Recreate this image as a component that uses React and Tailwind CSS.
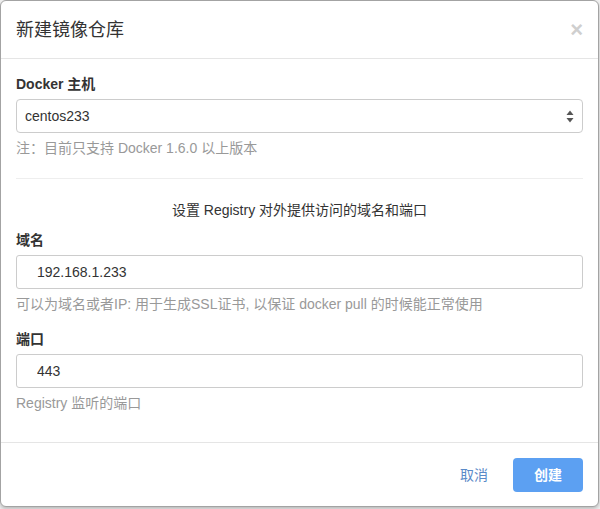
import React from 'react';

const font = 'font-["Liberation_Sans","Noto_Sans_CJK_SC",sans-serif]';

const FieldLabel = ({ children }) => (
    <div className='text-[14px] leading-[20px] font-bold text-[#333] mb-[5px]'>{children}</div>
);

const Help = ({ children }) => (
    <div className='text-[14px] leading-[20px] text-[#999] mt-[5px]'>{children}</div>
);

const TextInput = ({ value }) => (
    <input
        type='text'
        readOnly
        value={value}
        className='block w-full h-[34px] border border-[#ccc] rounded-[3px] pl-[20px] text-[14px] text-[#333] bg-white outline-none'
    />
);

const App = () => {
    return (
        <div className={`w-[600px] h-[509px] bg-[#f2f2f2] ${font}`}>
            <div className='w-[599px] h-[507px] bg-white border border-[#a3a3a3] rounded-[6px] flex flex-col shadow-[0_2px_4px_rgba(0,0,0,0.25)]'>
                <div className='h-[58px] shrink-0 px-[15px] flex items-center justify-between border-b border-[#e5e5e5]'>
                    <div className='text-[18px] text-[#333] pt-[2px]'>新建镜像仓库</div>
                    <div className='text-[22px] leading-none font-bold text-[#cfcfcf]'>×</div>
                </div>

                <div className='flex-1 px-[15px] pt-[15px]'>
                    <FieldLabel>Docker 主机</FieldLabel>
                    <div className='h-[34px] border border-[#ccc] rounded-[4px] flex items-center justify-between pl-[8px] pr-[8px]'>
                        <span className='text-[14px] text-[#333]'>centos233</span>
                        <svg width='8' height='13' viewBox='0 0 8 13'>
                            <path d='M4 0.5 L7.5 5 L0.5 5 Z' fill='#555' />
                            <path d='M4 12.5 L7.5 8 L0.5 8 Z' fill='#555' />
                        </svg>
                    </div>
                    <Help>注：目前只支持 Docker 1.6.0 以上版本</Help>

                    <div className='h-px bg-[#eee] mt-[20px]' />

                    <div className='text-center text-[14px] leading-[20px] text-[#333] mt-[21px] mb-[10px]'>
                        设置 Registry 对外提供访问的域名和端口
                    </div>

                    <FieldLabel>域名</FieldLabel>
                    <TextInput value='192.168.1.233' />
                    <Help>可以为域名或者IP: 用于生成SSL证书, 以保证 docker pull 的时候能正常使用</Help>

                    <div className='mt-[15px]'>
                        <FieldLabel>端口</FieldLabel>
                        <TextInput value='443' />
                        <Help>Registry 监听的端口</Help>
                    </div>
                </div>

                <div className='shrink-0 border-t border-[#e5e5e5] px-[15px] pt-[15px] pb-[14px] flex justify-end items-center'>
                    <button type='button' className='text-[14px] text-[#5a8ac8] mr-[25px]'>取消</button>
                    <button type='button' className='w-[70px] h-[34px] rounded-[4px] bg-[#5ca0f2] text-white text-[14px] font-bold'>
                        创建
                    </button>
                </div>
            </div>
        </div>
    );
};

export default App;
